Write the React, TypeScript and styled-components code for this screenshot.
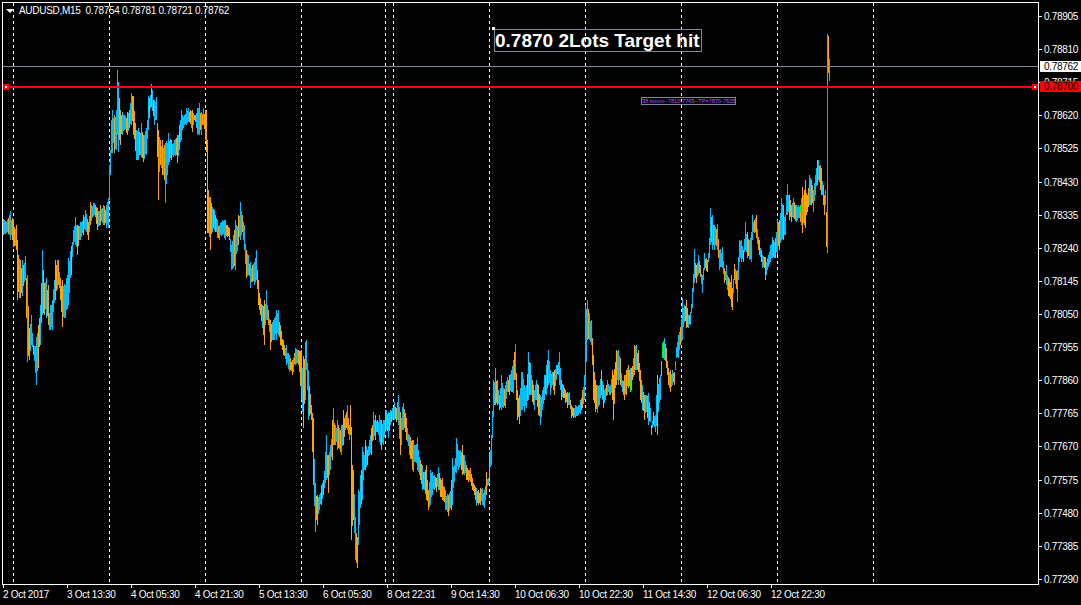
import React from "react";
import styled, { createGlobalStyle } from "styled-components";

const GlobalStyle = createGlobalStyle`
  html, body {
    margin: 0;
    padding: 0;
    background: #000;
  }
`;

const Terminal = styled.div`
  width: 1081px;
  height: 605px;
  overflow: hidden;
  background: #000;
  color: #fff;
  font-family: "Liberation Sans", Arial, sans-serif;
  font-size: 10px;
  letter-spacing: -0.3px;
  display: flex;
  flex-direction: column;
  padding-top: 2px;
  box-sizing: border-box;
`;

const ChartRow = styled.div`
  position: relative;
  height: 583px;
  padding-left: 2px;
  display: flex;
`;

const Plot = styled.div`
  position: relative;
  width: 1037px;
  height: 583px;
  box-sizing: border-box;
  border: 1px solid #fff;
  flex: none;
`;

const ChartSvg = styled.svg`
  display: block;
  width: 1035px;
  height: 581px;
  shape-rendering: crispEdges;
`;

const Legend = styled.div`
  position: absolute;
  left: 3px;
  top: 2px;
  height: 11px;
  display: flex;
  align-items: center;
  white-space: pre;
  line-height: 11px;
`;

const LegendArrow = styled.span`
  width: 0;
  height: 0;
  margin-right: 5px;
  border-left: 4px solid transparent;
  border-right: 4px solid transparent;
  border-top: 4px solid #fff;
`;

const TargetNote = styled.div`
  position: absolute;
  left: 491px;
  top: 26px;
  width: 208px;
  height: 23px;
  box-sizing: border-box;
  border: 1px solid #778899;
  font-size: 19px;
  font-weight: 700;
  letter-spacing: 0;
  line-height: 21px;
  white-space: nowrap;
`;

const ForumNote = styled.div`
  position: absolute;
  left: 638px;
  top: 94px;
  width: 95px;
  height: 8px;
  box-sizing: border-box;
  border: 1px solid #778899;
  color: #b45cff;
  font-size: 5.6px;
  letter-spacing: 0;
  line-height: 6px;
  white-space: nowrap;
  overflow: hidden;
`;

const TargetAnchor = styled.span<{ $color: string }>`
  position: absolute;
  left: -3px;
  top: -3px;
  width: 3px;
  height: 3px;
  background: ${(p) => p.$color};
`;

const LineHandle = styled.span<{ $side: "left" | "right" }>`
  position: absolute;
  top: 81px;
  ${(p) => (p.$side === "left" ? "left: 0;" : "right: 0;")}
  width: 2px;
  height: 2px;
  border: 2px solid #f00;
  background: #fff;
`;

const PriceAxis = styled.div`
  flex: 1;
  display: flex;
  flex-direction: column;
  justify-content: space-between;
  padding-top: 9px;
`;

const PriceLabel = styled.div`
  position: relative;
  height: 11px;
  line-height: 11px;
  padding-left: 5px;

  &::before {
    content: "";
    position: absolute;
    left: 0;
    top: 5px;
    width: 3px;
    height: 1px;
    background: #fff;
  }
`;

const PriceTag = styled.div<{ $top: number; $bg: string }>`
  position: absolute;
  right: 0;
  top: ${(p) => p.$top}px;
  width: 41px;
  height: 11px;
  line-height: 11px;
  padding-left: 4px;
  box-sizing: border-box;
  background: ${(p) => p.$bg};
  color: #000;
`;

const TimeAxis = styled.div`
  display: flex;
  padding-left: 3px;
  height: 20px;
`;

const TimeLabel = styled.div`
  position: relative;
  width: 64px;
  flex: none;
  padding-top: 4px;
  line-height: 11px;
  white-space: nowrap;

  &::before {
    content: "";
    position: absolute;
    left: 0;
    top: 0;
    width: 1px;
    height: 3px;
    background: #fff;
  }
`;

const UP = "#00bfff";
const DOWN = "#ffa500";
const NEUTRAL = "#00ff00";

// x, high y, low y traced by eye from the picture, in page pixels
const TRACE: number[][] = [
  [3,219,235],[8,218,234],[10,211,240],[13,219,247],[16,225,250],[17,240,300],[20,260,298],[22,260,296],[25,256,280],[27,275,362],
  [29,328,360],[31,315,345],[33,345,355],[36,337,385],[38,325,368],[40,305,345],[42,250,315],[44,283,315],[46,278,318],[48,285,325],
  [49,313,330],[50,305,330],[52,300,330],[55,260,300],[58,260,285],[60,278,300],[62,280,327],[65,285,318],[68,258,305],[71,246,275],
  [73,230,245],[75,217,245],[77,225,255],[80,222,240],[83,215,235],[85,210,230],[88,222,240],[90,202,225],[94,203,215],[97,208,230],
  [100,205,225],[103,205,225],[106,205,228],[108,198,228],[109,165,200],[110,150,175],[111,120,153],[112,110,153],[114,115,153],[116,110,150],
  [117,70,135],[118,82,152],[120,110,145],[122,112,135],[124,115,130],[127,112,135],[129,110,128],[131,93,125],[133,96,135],[136,130,160],
  [138,128,160],[141,123,157],[143,135,162],[146,128,155],[148,96,130],[150,95,108],[151,84,107],[154,100,125],[156,97,120],[158,130,200],
  [160,140,165],[162,140,175],[164,145,180],[165,143,203],[168,133,165],[171,140,160],[174,140,155],[177,135,163],[179,125,150],[181,110,140],
  [184,115,125],[186,108,125],[188,108,122],[192,110,132],[194,115,120],[197,108,135],[199,103,135],[201,112,135],[203,108,125],[205,110,140],
  [206,110,152],[207,140,233],[208,190,233],[210,197,250],[212,207,232],[214,210,230],[217,220,238],[219,225,240],[222,220,235],[225,220,240],
  [227,225,237],[229,228,240],[231,245,270],[233,235,268],[235,220,270],[238,215,245],[240,202,240],[242,215,232],[244,225,250],[246,250,278],
  [248,255,275],[250,262,288],[252,265,282],[254,262,285],[256,250,280],[258,280,305],[260,298,315],[262,305,328],[264,300,345],[266,290,320],
  [268,310,325],[270,320,350],[273,320,340],[276,310,340],[278,310,335],[280,325,345],[283,340,355],[286,345,365],[289,355,372],[292,360,375],
  [295,348,365],[298,350,365],[301,350,400],[303,356,428],[305,342,400],[306,340,370],[308,370,420],[311,405,420],[313,418,485],[315,483,532],
  [317,495,525],[319,495,510],[321,485,505],[323,480,495],[326,435,480],[328,455,493],[330,445,470],[332,420,460],[333,408,445],[335,425,445],
  [337,420,450],[340,430,452],[341,425,455],[343,410,445],[345,415,430],[347,405,430],[349,425,440],[350,405,435],[351,427,540],[353,470,520],
  [355,517,560],[357,537,568],[358,490,545],[360,475,508],[362,447,500],[364,455,470],[365,440,470],[367,450,465],[369,440,455],[371,428,455],
  [373,412,440],[375,415,440],[377,420,432],[379,415,442],[381,420,450],[383,420,445],[385,410,432],[386,410,430],[388,412,438],[390,410,425],
  [392,408,420],[394,402,420],[396,408,422],[398,395,425],[400,412,455],[403,403,430],[406,418,440],[409,435,455],[412,440,470],[413,440,472],
  [415,445,462],[417,437,470],[420,460,480],[422,465,490],[424,472,490],[426,465,500],[428,490,510],[430,470,505],[432,472,495],[434,475,490],
  [436,478,492],[438,467,490],[440,478,497],[442,478,500],[445,490,510],[448,495,516],[451,480,510],[452,458,505],[454,465,482],[456,438,473],
  [458,450,470],[460,450,465],[462,445,475],[464,455,475],[466,465,480],[468,470,482],[470,468,482],[472,478,490],[474,485,495],[476,488,506],
  [478,490,505],[480,488,505],[482,488,505],[484,490,508],[486,472,495],[488,478,485],[489,452,482],[491,435,465],[493,380,417],[495,368,405],
  [497,380,405],[499,395,410],[501,375,410],[503,388,408],[505,385,408],[507,377,392],[509,375,395],[511,370,392],[513,360,393],[515,344,380],
  [517,390,420],[519,395,424],[521,372,410],[522,372,410],[524,385,412],[526,385,408],[528,352,400],[530,363,395],[532,380,402],[534,390,410],
  [536,380,400],[538,385,415],[540,395,425],[542,390,410],[544,375,400],[546,365,395],[548,350,385],[550,370,395],[552,372,385],[554,370,395],
  [556,365,380],[558,362,375],[559,352,385],[561,380,400],[563,385,398],[565,390,403],[567,392,408],[569,392,405],[571,405,418],[573,408,418],
  [575,405,418],[578,405,415],[580,400,414],[582,390,408],[584,375,400],[585,305,385],[587,300,340],[589,313,340],[591,320,345],[593,355,400],
  [595,380,412],[597,385,413],[599,385,405],[601,370,395],[603,385,408],[605,388,400],[607,380,395],[610,385,395],[612,370,400],[613,375,420],
  [616,350,385],[618,350,385],[620,358,385],[622,380,392],[624,375,400],[626,370,395],[628,365,388],[631,368,390],[634,345,375],[636,345,370],
  [638,350,372],[640,370,400],[642,385,410],[644,395,420],[646,395,412],[648,393,425],[650,408,422],[651,425,435],[653,412,425],[655,415,432],
  [657,375,435],[660,375,400],[662,343,358],[664,338,360],[666,348,368],[668,368,385],[670,370,392],[672,370,385],[674,372,385],[676,347,358],
  [678,335,358],[680,327,345],[682,298,340],[684,305,322],[686,300,328],[688,315,328],[690,312,325],[692,288,308],[694,249,283],[696,265,283],
  [698,255,275],[700,265,277],[702,275,293],[704,253,270],[707,260,272],[709,238,258],[710,208,245],[712,215,250],[714,225,250],[717,224,250],
  [719,250,270],[722,247,268],[724,268,283],[726,265,285],[728,277,296],[731,275,307],[732,288,310],[734,264,280],[737,270,302],[739,240,262],
  [741,240,262],[743,250,262],[745,222,250],[747,232,258],[749,240,260],[751,232,262],[752,215,240],[754,220,233],[756,215,238],[758,237,250],
  [759,240,255],[761,250,262],[762,255,268],[764,257,268],[765,257,280],[767,258,270],[770,245,262],[772,237,258],[775,238,258],[777,220,255],
  [779,220,250],[781,198,240],[783,205,240],[785,215,235],[786,195,215],[787,184,215],[789,195,220],[791,205,222],[793,198,218],[796,205,222],
  [798,205,218],[800,205,222],[802,187,233],[804,190,225],[805,180,228],[807,195,212],[809,175,205],[811,180,205],[813,190,212],[815,175,195],
  [817,160,185],[818,160,180],[820,165,190],[821,168,195],[823,185,205],[824,195,215],[825,190,205],[826,212,247],[827,34,253],[828,36,73],[829,59,81],
];

const FIXED_COLOR: Record<number, string> = {
  826: DOWN,
  827: UP,
  828: DOWN,
  829: UP,
};

// the few doji bars, painted over the rest
const DOJI = "M495.5 368V395M630.5 380V392M662.5 343V358M663.5 343V358M800.5 205V212";

function buildBars() {
  let seed = 20171012;
  const rand = () => {
    seed = (seed * 1664525 + 1013904223) >>> 0;
    return seed / 4294967296;
  };
  const paths: Record<string, string> = { [UP]: "", [DOWN]: "" };
  let prevMid = 227;
  for (let i = 0; i < TRACE.length - 1; i++) {
    const [x0, h0, l0] = TRACE[i];
    const [x1, h1, l1] = TRACE[i + 1];
    for (let x = x0; x < x1; x++) {
      const t = (x - x0) / (x1 - x0);
      const h = h0 + (h1 - h0) * t;
      const l = l0 + (l1 - l0) * t;
      const spread = t === 0 ? 0 : (l - h) * 0.25;
      const high = Math.round(h + rand() * spread);
      const low = Math.max(high + 2, Math.round(l - rand() * spread));
      const mid = (h + l) / 2;
      const rising = mid <= prevMid;
      const color =
        FIXED_COLOR[x] ?? (rand() < (rising ? 0.85 : 0.35) ? UP : DOWN);
      paths[color] += `M${x + 0.5} ${high}V${low}`;
      prevMid = mid;
    }
  }
  const [lx, lh, ll] = TRACE[TRACE.length - 1];
  paths[UP] += `M${lx + 0.5} ${lh}V${ll}`;
  return paths;
}

const BARS = buildBars();

const DAY_LINES = [13, 109, 205, 301, 385, 393, 489, 585, 681, 777, 873];

const PRICES = [
  "0.78905", "0.78810", "0.78715", "0.78620", "0.78525", "0.78430",
  "0.78335", "0.78240", "0.78145", "0.78050", "0.77955", "0.77860",
  "0.77765", "0.77670", "0.77575", "0.77480", "0.77385", "0.77290",
];

const TIMES = [
  "2 Oct 2017", "3 Oct 13:30", "4 Oct 05:30", "4 Oct 21:30", "5 Oct 13:30",
  "6 Oct 05:30", "8 Oct 22:31", "9 Oct 14:30", "10 Oct 06:30", "10 Oct 22:30",
  "11 Oct 14:30", "12 Oct 06:30", "12 Oct 22:30",
];

export default function App() {
  return (
    <>
      <GlobalStyle />
      <Terminal>
        <ChartRow>
          <Plot>
            <ChartSvg viewBox="3 3 1035 581">
              {DAY_LINES.map((x) => (
                <line
                  key={x}
                  x1={x + 0.5}
                  x2={x + 0.5}
                  y1={3}
                  y2={584}
                  stroke="#fff"
                  strokeDasharray="3 3"
                />
              ))}
              <path d={BARS[DOWN]} stroke={DOWN} fill="none" />
              <path d={BARS[UP]} stroke={UP} fill="none" />
              <path d={DOJI} stroke={NEUTRAL} fill="none" />
              <line x1={3} x2={1038} y1={66.5} y2={66.5} stroke="#778899" />
              <line x1={3} x2={1038} y1={87} y2={87} stroke="#f00" strokeWidth={2} />
            </ChartSvg>
            <Legend>
              <LegendArrow />
              {"AUDUSD,M15  0.78754 0.78781 0.78721 0.78762"}
            </Legend>
            <TargetNote>
              <TargetAnchor $color="#fff" />
              0.7870 2Lots Target hit
            </TargetNote>
            <ForumNote>
              <TargetAnchor $color="#c050ff" />
              38 forum--7810-7765--TP=7870-7605
            </ForumNote>
            <LineHandle $side="left" />
            <LineHandle $side="right" />
          </Plot>
          <PriceAxis>
            {PRICES.map((price) => (
              <PriceLabel key={price}>{price}</PriceLabel>
            ))}
          </PriceAxis>
          <PriceTag $top={59} $bg="#fff">0.78762</PriceTag>
          <PriceTag $top={79} $bg="#f00">0.78700</PriceTag>
        </ChartRow>
        <TimeAxis>
          {TIMES.map((time) => (
            <TimeLabel key={time}>{time}</TimeLabel>
          ))}
        </TimeAxis>
      </Terminal>
    </>
  );
}
